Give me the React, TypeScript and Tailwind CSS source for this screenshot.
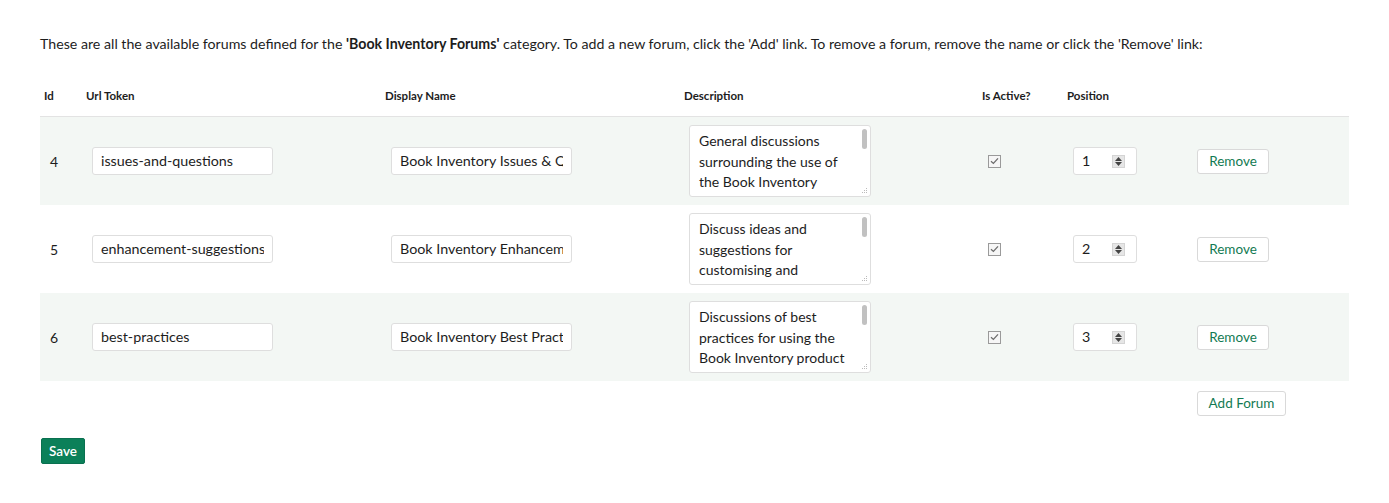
import React from "react";

type Forum = {
  id: number;
  token: string;
  name: string;
  description: string;
  position: number;
};

const forums: Forum[] = [
  {
    id: 4,
    token: "issues-and-questions",
    name: "Book Inventory Issues & Questions",
    description: "General discussions surrounding the use of the Book Inventory product",
    position: 1,
  },
  {
    id: 5,
    token: "enhancement-suggestions",
    name: "Book Inventory Enhancement Suggestions",
    description: "Discuss ideas and suggestions for customising and enhancing the product",
    position: 2,
  },
  {
    id: 6,
    token: "best-practices",
    name: "Book Inventory Best Practices",
    description: "Discussions of best practices for using the Book Inventory product",
    position: 3,
  },
];

const cols = "grid grid-cols-[42px_299px_299px_298px_85px_124px_1fr]";

const TextBox = ({ value, width }: { value: string; width: string }) => (
  <div
    className={`${width} h-[28px] bg-white border border-[#dedede] rounded-[3px] px-[8px] flex items-center text-[14.3px] text-[#1d1d1d]`}
  >
    <div className="w-full overflow-hidden whitespace-nowrap">{value}</div>
  </div>
);

const Description = ({ text }: { text: string }) => (
  <div className="relative w-[182px] h-[72px] bg-white border border-[#dedede] rounded-[3px] overflow-hidden">
    <div className="pl-[9px] pr-[16px] pt-[5px] text-[14px] leading-[20.7px] text-[#1d1d1d]">
      {text}
    </div>
    <div className="absolute right-[3px] top-[3px] w-[5px] h-[20px] rounded-full bg-[#c1c1c1]" />
    <svg className="absolute right-[2px] bottom-[2px]" width="7" height="7" viewBox="0 0 7 7">
      <rect x="5" y="1" width="1" height="1" fill="#bbb" />
      <rect x="3" y="3" width="1" height="1" fill="#bbb" />
      <rect x="5" y="3" width="1" height="1" fill="#bbb" />
      <rect x="1" y="5" width="1" height="1" fill="#bbb" />
      <rect x="3" y="5" width="1" height="1" fill="#bbb" />
      <rect x="5" y="5" width="1" height="1" fill="#bbb" />
    </svg>
  </div>
);

const CheckBox = () => (
  <div className="w-[13px] h-[13px] border border-[#9a9a9a] bg-[#f6f6f6] flex items-center justify-center">
    <svg width="9" height="8" viewBox="0 0 9 8">
      <path d="M1 4.2 L3.4 6.4 L8 1.4" fill="none" stroke="#6d6d6d" strokeWidth="1.3" />
    </svg>
  </div>
);

const Position = ({ value }: { value: number }) => (
  <div className="w-[64px] h-[28px] bg-white border border-[#dedede] rounded-[3px] pl-[8px] pr-[11px] flex items-center justify-between text-[14.3px] text-[#1d1d1d]">
    <span>{value}</span>
    <div className="w-[13px] h-[13px] bg-[#e6e6e6] border border-[#d4d4d4] flex flex-col items-center justify-center gap-[1px]">
      <svg width="7" height="4" viewBox="0 0 7 4">
        <path d="M3.5 0 L7 4 L0 4 Z" fill="#444" />
      </svg>
      <svg width="7" height="4" viewBox="0 0 7 4">
        <path d="M0 0 L7 0 L3.5 4 Z" fill="#444" />
      </svg>
    </div>
  </div>
);

const LinkButton = ({ label, width }: { label: string; width: string }) => (
  <button
    className={`${width} h-[25px] bg-white border border-[#d9d9d9] rounded-[3px] text-[13.5px] text-[#137a52] flex items-center justify-center`}
  >
    {label}
  </button>
);

export default function App() {
  return (
    <div className="min-h-[503px] bg-white font-['Lato','Open_Sans',sans-serif] text-[#1d1d1d] px-[40px] pt-[35px]">
      <p className="text-[14.2px] leading-[17px]">
        These are all the available forums defined for the{" "}
        <b>'Book Inventory Forums'</b> category. To add a new forum, click the 'Add' link. To remove a
        forum, remove the name or click the 'Remove' link:
      </p>

      <div className="mt-[28px] w-[1309px]">
        <div className={`${cols} h-[36px] items-center text-[11.5px] font-bold pb-[4px]`}>
          <div className="pl-[4px]">Id</div>
          <div className="pl-[4px]">Url Token</div>
          <div className="pl-[4px]">Display Name</div>
          <div className="pl-[4px]">Description</div>
          <div className="pl-[4px]">Is Active?</div>
          <div className="pl-[4px]">Position</div>
          <div />
        </div>

        <div className="border-t border-[#e3e3e3]">
          {forums.map((f, i) => (
            <div
              key={f.id}
              className={`${cols} h-[88px] items-center text-[14px] ${i % 2 === 0 ? "bg-[#f3f7f4]" : "bg-white"}`}
            >
              <div className="pl-[10px]">{f.id}</div>
              <div className="pl-[10px]">
                <TextBox value={f.token} width="w-[181px]" />
              </div>
              <div className="pl-[10px]">
                <TextBox value={f.name} width="w-[181px]" />
              </div>
              <div className="pl-[9px]">
                <Description text={f.description} />
              </div>
              <div className="pl-[10px]">
                <CheckBox />
              </div>
              <div className="pl-[10px]">
                <Position value={f.position} />
              </div>
              <div className="pl-[10px]">
                <LinkButton label="Remove" width="w-[72px]" />
              </div>
            </div>
          ))}
        </div>

        <div className={`${cols} pt-[10px]`}>
          <div className="col-start-7 pl-[10px]">
            <LinkButton label="Add Forum" width="w-[89px]" />
          </div>
        </div>
      </div>

      <button className="mt-[22px] ml-[1px] h-[26px] px-[7px] bg-[#0b8059] border border-[#0a7050] rounded-[2px] text-white text-[13.5px] font-semibold">
        Save
      </button>
    </div>
  );
}
